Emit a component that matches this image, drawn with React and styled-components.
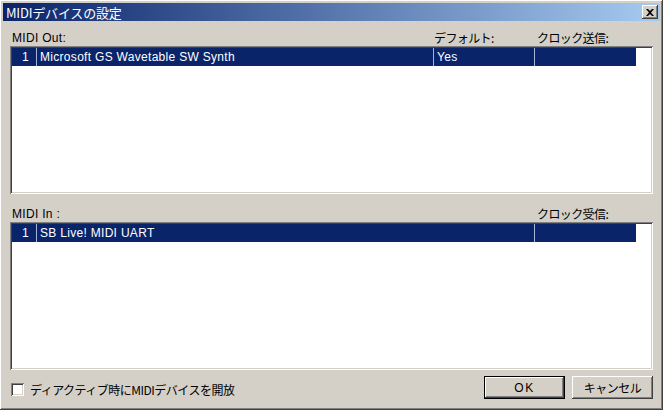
import React from 'react';
import styled, { createGlobalStyle, css } from 'styled-components';

const face = '#d4d0c8';
const navy = '#0a246a';

const Global = createGlobalStyle`
  html, body { margin: 0; padding: 0; background: ${face}; }
  body {
    font-family: "Liberation Sans", "Noto Sans CJK JP", sans-serif;
    font-size: 12px;
    color: #000;
  }
`;

const raised = css`
  box-shadow: inset -1px -1px #404040, inset 1px 1px #fff, inset -2px -2px #808080, inset 2px 2px ${face};
`;
const sunken = css`
  box-shadow: inset 1px 1px #808080, inset -1px -1px #fff, inset 2px 2px #404040, inset -2px -2px ${face};
`;

const Window = styled.div`
  width: 663px;
  height: 410px;
  box-sizing: border-box;
  background: ${face};
  padding: 3px;
  display: flex;
  flex-direction: column;
  ${raised};
`;

const TitleBar = styled.div`
  height: 18px;
  display: flex;
  align-items: center;
  justify-content: space-between;
  padding: 0 2px 0 3px;
  background: linear-gradient(to right, ${navy}, #a6caf0);
  color: #fff;
  font-family: "Noto Sans CJK JP", sans-serif;
  font-size: 13px;
  font-weight: 400;
  letter-spacing: -0.2px;
`;

const CloseButton = styled.div`
  width: 16px;
  height: 14px;
  box-sizing: border-box;
  background: ${face};
  ${raised};
  display: flex;
  align-items: center;
  justify-content: center;
  color: #000;
`;

const Body = styled.div`
  flex: 1;
  display: flex;
  flex-direction: column;
  padding: 9px 7px 0 7px;
`;

const columns = '25px 397px 101px 101px 1fr';

const HeaderRow = styled.div`
  display: grid;
  grid-template-columns: ${columns};
  padding-left: 2px;
  height: 16px;
  line-height: 16px;
  color: #000;
  margin-top: ${p => p.$gap}px;
`;

const HeaderCell = styled.div`
  grid-column: ${p => p.$col};
  padding-left: ${p => p.$pad || 0}px;
  white-space: nowrap;
  font-family: ${p => (p.$jp ? '"Noto Sans CJK JP", sans-serif' : 'inherit')};
  letter-spacing: ${p => (p.$jp ? '-0.6px' : '0.3px')};
`;

const ListBox = styled.div`
  height: 148px;
  box-sizing: border-box;
  background: #fff;
  padding: 2px;
  ${sunken};
`;

const Row = styled.div`
  display: grid;
  grid-template-columns: ${columns};
  height: 18px;
  line-height: 18px;
  color: #fff;
  letter-spacing: 0.3px;
`;

const Cell = styled.div`
  background: ${p => (p.$blank ? 'transparent' : navy)};
  border-right: ${p => (p.$divider ? '1px solid #a6b4d8' : 'none')};
  text-align: ${p => (p.$right ? 'right' : 'left')};
  padding: ${p => (p.$right ? '0 7px 0 0' : '0 0 0 3px')};
  white-space: nowrap;
  overflow: hidden;
`;

const Footer = styled.div`
  display: flex;
  align-items: center;
  justify-content: space-between;
  margin-top: 6px;
  padding-left: 1px;
`;

const CheckLabel = styled.label`
  display: flex;
  align-items: center;
  gap: 6px;
  font-family: "Noto Sans CJK JP", sans-serif;
  letter-spacing: -0.5px;
  margin-top: 3px;
`;

const Box = styled.span`
  width: 13px;
  height: 13px;
  box-sizing: border-box;
  background: #fff;
  ${sunken};
`;

const Buttons = styled.div`
  display: flex;
  gap: 7px;
`;

const Button = styled.div`
  width: 81px;
  height: 23px;
  box-sizing: border-box;
  background: ${face};
  display: flex;
  align-items: center;
  justify-content: center;
  letter-spacing: ${p => (p.$jp ? '-0.5px' : '1.5px')};
  font-family: ${p => (p.$jp ? '"Noto Sans CJK JP", sans-serif' : 'inherit')};
  ${p =>
    p.$default
      ? css`
          box-shadow: inset 0 0 0 1px #000, inset -2px -2px #404040, inset 2px 2px #fff, inset -3px -3px #808080;
        `
      : raised};
`;

const CloseIcon = () => (
  <svg width="8" height="7" viewBox="0 0 8 7">
    <path d="M0 0h2l2 2 2-2h2L5 3.5 8 7H6L4 5 2 7H0l3-3.5z" fill="#000" />
  </svg>
);

const DeviceList = ({ rows, withDefault }) => (
  <ListBox>
    {rows.map(r => (
      <Row key={r.id}>
        <Cell $right $divider>{r.id}</Cell>
        <Cell $divider={withDefault}>{r.name}</Cell>
        {withDefault ? <Cell $divider>{r.def}</Cell> : <Cell $divider />}
        <Cell />
        <Cell $blank />
      </Row>
    ))}
  </ListBox>
);

export default function App () {
  return (
    <>
      <Global />
      <Window>
        <TitleBar>
          <span>MIDIデバイスの設定</span>
          <CloseButton><CloseIcon /></CloseButton>
        </TitleBar>
        <Body>
          <HeaderRow $gap={0}>
            <HeaderCell $col="1 / 3">MIDI Out:</HeaderCell>
            <HeaderCell $col="3" $jp>デフォルト:</HeaderCell>
            <HeaderCell $col="4" $pad={2} $jp>クロック送信:</HeaderCell>
          </HeaderRow>
          <DeviceList withDefault rows={[{ id: 1, name: 'Microsoft GS Wavetable SW Synth', def: 'Yes' }]} />
          <HeaderRow $gap={12}>
            <HeaderCell $col="1 / 3">MIDI In :</HeaderCell>
            <HeaderCell $col="4" $pad={2} $jp>クロック受信:</HeaderCell>
          </HeaderRow>
          <DeviceList rows={[{ id: 1, name: 'SB Live! MIDI UART' }]} />
          <Footer>
            <CheckLabel>
              <Box />
              ディアクティブ時にMIDIデバイスを開放
            </CheckLabel>
            <Buttons>
              <Button $default>OK</Button>
              <Button $jp>キャンセル</Button>
            </Buttons>
          </Footer>
        </Body>
      </Window>
    </>
  );
}
